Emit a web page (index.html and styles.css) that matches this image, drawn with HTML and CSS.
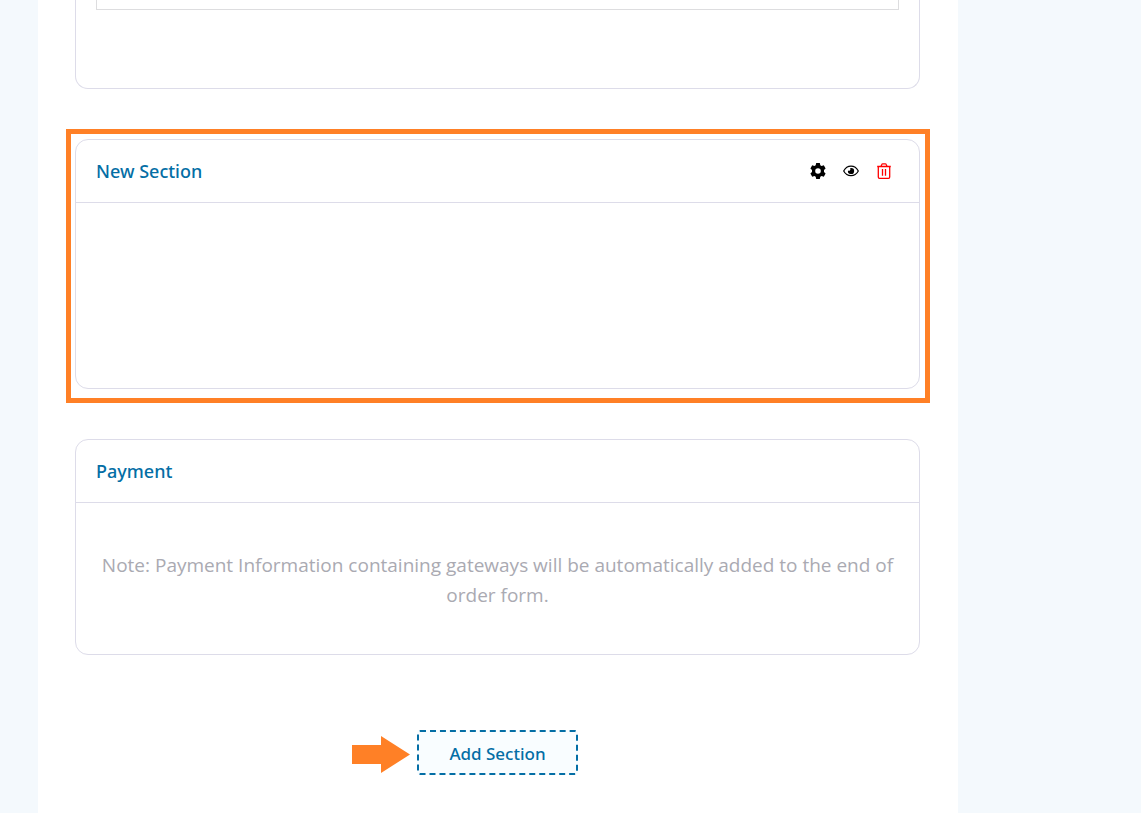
FILE: index.html
```html
<!DOCTYPE html>
<html lang="en">
<head>
<meta charset="utf-8">
<meta name="viewport" content="width=device-width, initial-scale=1">
<title>Order form sections</title>
<link rel="stylesheet" href="styles.css">
</head>
<body>
<main class="builder">
  <section class="card card-first" aria-label="Section">
    <div class="field-box"></div>
  </section>

  <div class="highlight">
    <section class="card">
      <header class="card-header">
        <h2 class="card-title">New Section</h2>
        <div class="actions">
          <button class="icon-button" type="button" aria-label="Settings">
            <svg class="icon" viewBox="0 0 16 16"><path fill="currentColor" fill-rule="evenodd" d="M6.2 0h3.6l.5 2.2 1.3.8 2.2-.7 1.8 3.1L14 7v2l1.6 1.6-1.8 3.1-2.2-.7-1.3.8-.5 2.2H6.2l-.5-2.2-1.3-.8-2.2.7-1.800-3.100L2 9V7L.4 5.400l1.800-3.100 2.200.7 1.300-.8zM8 5.200a2.800 2.800 0 1 0 0 5.600a2.800 2.800 0 0 0 0-5.600z"/></svg>
          </button>
          <button class="icon-button" type="button" aria-label="Preview">
            <svg class="icon" viewBox="0 0 16 16"><path fill="none" stroke="currentColor" stroke-width="1.200" d="M.7 8C2.300 5 5 3.200 8 3.200S13.700 5 15.300 8C13.700 11 11 12.700 8 12.700S2.300 11 .7 8z"/><path fill="currentColor" d="M8 4.900a3.100 3.100 0 1 1-3 2.500q.9.700 1.900 0Q7.700 6.500 7.300 5.300L7.100 5z"/></svg>
          </button>
          <button class="icon-button danger" type="button" aria-label="Delete">
            <svg class="icon" viewBox="0 0 16 16"><path fill="none" stroke="currentColor" stroke-width="1.300" d="M1.200 3.500h13.600M5 3.300l.8-1.900q.2-.6.900-.6h2.600q.7 0 .9.600l.8 1.900M2.300 3.500v10.600q0 1.200 1.200 1.200h9q1.200 0 1.200-1.200V3.500M6.500 6v6.700M9.500 6v6.700"/></svg>
          </button>
        </div>
      </header>
      <div class="drop-area"></div>
    </section>
  </div>

  <section class="card">
    <header class="card-header">
      <h2 class="card-title">Payment</h2>
    </header>
    <p class="note">Note: Payment Information containing gateways will be automatically added to the end of order form.</p>
  </section>

  <div class="add-row">
    <svg class="arrow" viewBox="0 0 58 37" aria-hidden="true"><path fill="#ff8026" d="M0 9h29V0l29 18.500L29 37v-9H0z"/></svg>
    <button class="add-button" type="button">Add Section</button>
  </div>
</main>
</body>
</html>
```
FILE: styles.css
```css
* {
  box-sizing: border-box;
}

body {
  margin: 0;
  padding: 0 183px 0 38px;
  min-height: 100vh;
  display: flex;
  background: #f4f9fd;
  font-family: "Noto Sans", "Open Sans", sans-serif;
}

.builder {
  flex: 1;
  min-width: 0;
  padding: 0 38px 38px 37px;
  background: #fff;
}

.card {
  border: 1px solid #dddce9;
  border-radius: 13px;
  background: #fff;
}

.card-first {
  border-top: 0;
  border-top-left-radius: 0;
  border-top-right-radius: 0;
  padding: 0 20px 78px;
}

.field-box {
  height: 10px;
  border: 1px solid #dddddf;
  border-top: 0;
}

.highlight {
  margin: 40px -10px 36px -9px;
  border: 5px solid #ff8026;
  padding: 5px 5px 9px 4px;
}

.card-header {
  display: flex;
  align-items: center;
  justify-content: space-between;
  min-height: 63px;
  padding: 0 27px 0 20px;
  border-bottom: 1px solid #dddce9;
}

.card-title {
  margin: 0;
  color: #046ea5;
  font-size: 18px;
  line-height: 24px;
  font-weight: 500;
}

.actions {
  display: flex;
  gap: 17px;
}

.icon-button {
  display: flex;
  padding: 0;
  border: 0;
  background: none;
  color: #000;
  cursor: pointer;
}

.danger {
  color: #f00;
}

.icon {
  width: 16px;
  height: 16px;
}

.drop-area {
  min-height: 185px;
}

.note {
  margin: 0;
  padding: 47px 20px 44px;
  color: #aaaab2;
  font-family: "Open Sans", "Noto Sans", sans-serif;
  font-size: 19px;
  line-height: 30px;
  text-align: center;
}

.add-row {
  position: relative;
  width: fit-content;
  margin: 75px auto 0;
}

.add-button {
  display: block;
  padding: 9px 30px 7px;
  border: 2px dashed #046ea5;
  border-radius: 3px;
  background: #f9fdff;
  color: #046ea5;
  font: 500 17px/25px "Noto Sans", "Open Sans", sans-serif;
  cursor: pointer;
}

.arrow {
  position: absolute;
  top: 6px;
  right: calc(100% + 7px);
  width: 58px;
  height: 37px;
}
```
